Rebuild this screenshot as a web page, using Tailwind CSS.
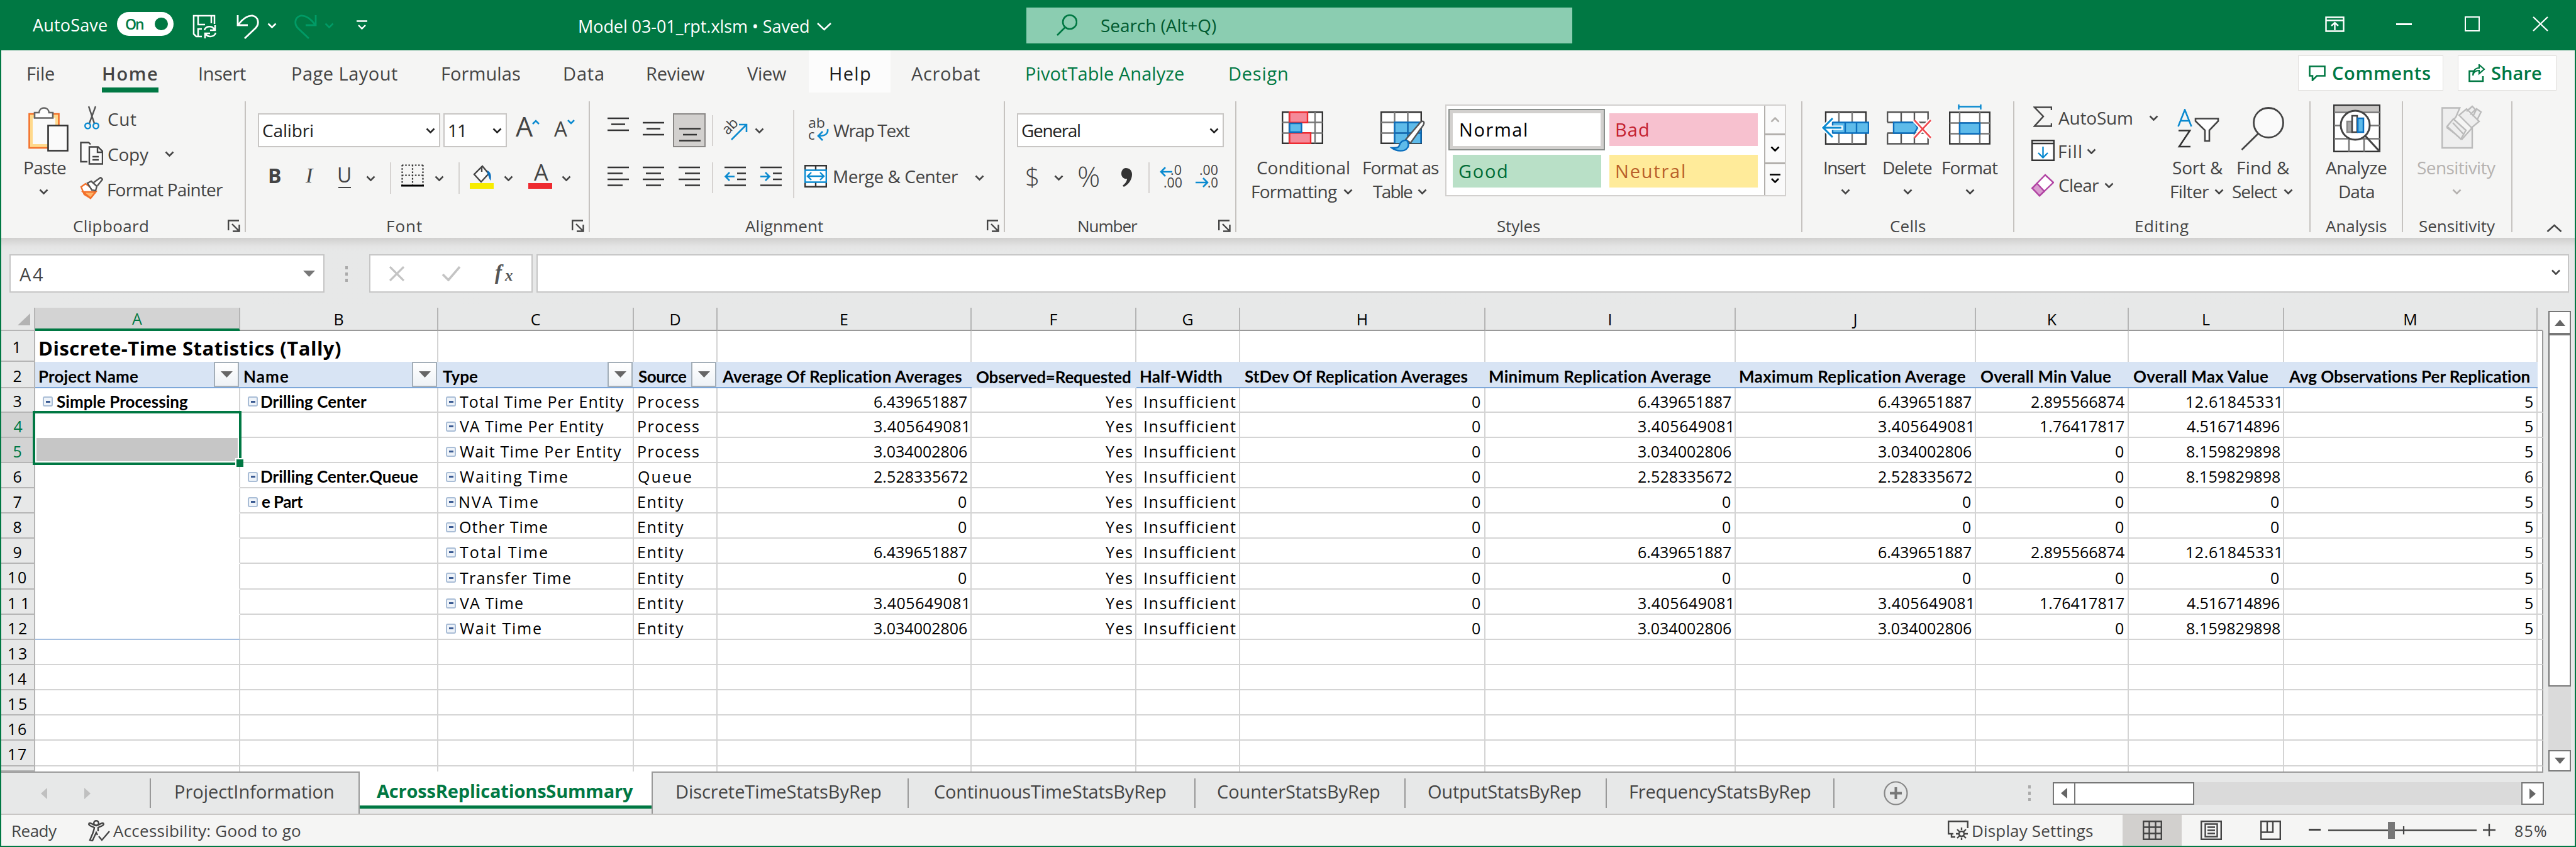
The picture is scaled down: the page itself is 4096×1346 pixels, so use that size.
<!DOCTYPE html>
<html lang="en">
<head>
<meta charset="utf-8">
<title>Model 03-01_rpt.xlsm</title>
<script src="https://cdn.jsdelivr.net/npm/@tailwindcss/browser@4"></script>
</head>
<body class="w-[4096px] h-[1346px] overflow-hidden bg-[#007843]">
<svg class="hidden">
  <symbol id="chev" viewBox="0 0 15 9"><path d="M1.5 1.5l6 6 6-6" fill="none" stroke="currentColor" stroke-width="2.6"/></symbol>
  <symbol id="launch" viewBox="0 0 20 20"><path d="M1.2 17V1.5H18M7 7l10 10M18.5 8v10.5H8" fill="none" stroke="#444" stroke-width="2.4"/></symbol>
</svg>
<div class="w-[4096px] h-[1346px] border-x-2 border-b-2 border-[#007843] bg-[#f5f5f4] font-['Open_Sans',sans-serif] text-[28px] leading-[30px] text-[#444] flex flex-col [&>*]:shrink-0">

<!-- Title bar -->
<header class="h-[80px] bg-[#007843] text-white flex items-center [&>*]:shrink-0">
  <span class="ml-[50px] text-[27px]" data-w="118">AutoSave</span>
  <div class="ml-[16px] -mt-[4px] w-[90px] h-[38px] rounded-full bg-white flex items-center pl-[14px] pr-[9px] justify-between text-[#007843]">
    <span class="text-[23px] font-semibold" data-w="28">On</span><i class="w-[21px] h-[20px] rounded-full bg-[#007843]"></i>
  </div>
  <svg class="ml-[30px] mt-[5px] w-[39px] h-[39px]" viewBox="0 0 39 39" fill="none" stroke="#fff" stroke-width="2.5"><path d="M15 35H6L2 31V2h33v13M9 2v14h11M30 2v12M9 35V23h6"/><path d="M19 25c2-7 12-8 16-1M36 17v8h-8M37 29c-2 7-12 8-16 2M20 38v-8h8"/></svg>
  <svg class="ml-[31px] mt-[5px] w-[36px] h-[39px]" viewBox="0 0 36 39" fill="none" stroke="#fff" stroke-width="2.8"><path d="M2 1v16h16M3 16C10 7 18 1 26 2c9 2 11 13 4 20L13 38"/></svg>
  <svg class="ml-[13px] w-[15px] h-[9px]"><use href="#chev"/></svg>
  <svg class="ml-[28px] mt-[5px] w-[36px] h-[39px]" viewBox="0 0 36 39" fill="none" stroke="#009b66" stroke-width="2.8"><path d="M34 1v16H18M33 16C26 7 18 1 10 2 1 4-1 15 6 22l17 16"/></svg>
  <svg class="ml-[12px] w-[15px] h-[9px] text-[#009b66]"><use href="#chev"/></svg>
  <svg class="ml-[36px] w-[17px] h-[16px]" viewBox="0 0 17 16" fill="none" stroke="#fff" stroke-width="2.4"><path d="M0 1.5h17M3 8l5.500 5.500L14 8"/></svg>
  <span class="ml-[337px] mt-[3px] text-[27px]" data-w="365">Model 03-01_rpt.xlsm • Saved</span>
  <svg class="ml-[12px] mt-[3px] w-[25px] h-[14px]" viewBox="0 0 25 14" fill="none" stroke="#fff" stroke-width="2.6"><path d="M2 2l10.500 10L23 2"/></svg>
  <div class="ml-[309px] w-[868px] h-[57px] bg-[#8bcdb1] text-[#005a30] flex items-center">
    <svg class="ml-[48px] w-[33px] h-[36px]" viewBox="0 0 33 36" fill="none" stroke="#007843" stroke-width="2.6"><circle cx="21" cy="13" r="11"/><path d="M14 21L1 34"/></svg>
    <span class="ml-[38px]" data-w="183">Search (Alt+Q)</span>
  </div>
  <svg class="ml-[1197px] -mt-[4px] w-[31px] h-[25px]" viewBox="0 0 31 25" fill="none" stroke="#fff" stroke-width="2.4"><path d="M1.500 1.500h28v22h-28zM1.500 6.500h28M15.500 22V11M10 15l5.500-5 5.500 5"/></svg>
  <i class="ml-[82px] -mt-[4px] w-[25px] h-[3px] bg-white"></i>
  <i class="ml-[84px] -mt-[4px] w-[24px] h-[24px] border-[2.500px] border-white"></i>
  <svg class="ml-[84px] -mt-[4px] w-[25px] h-[24px]" viewBox="0 0 25 24" stroke="#fff" stroke-width="2.4"><path d="M1 1l23 22M24 1L1 23"/></svg>
</header>

<!-- Ribbon tabs -->
<nav class="h-[68px] flex text-[29px] [&>*]:shrink-0 [&>span]:mt-[22px]">
  <span class="ml-[42px]" data-w="42">File</span>
  <div class="ml-[76px] w-[90px] h-[67px] border-b-[8px] border-[#007843] pt-[22px] pl-[2px] font-semibold"><span data-w="86">Home</span></div>
  <span class="ml-[65px]" data-w="74">Insert</span>
  <span class="ml-[74px]" data-w="167">Page Layout</span>
  <span class="ml-[71px]" data-w="124">Formulas</span>
  <span class="ml-[70px]" data-w="62">Data</span>
  <span class="ml-[70px]" data-w="92">Review</span>
  <span class="ml-[67px]" data-w="63">View</span>
  <div class="ml-[35px] w-[130px] h-[67px] bg-[#fcfcfc] pt-[22px] pl-[34px] text-[#1c1c1c] font-medium"><span data-w="64">Help</span></div>
  <span class="ml-[33px]" data-w="109">Acrobat</span>
  <span class="ml-[74px] text-[#007843] font-medium" data-w="250">PivotTable Analyze</span>
  <span class="ml-[73px] text-[#007843] font-medium" data-w="92">Design</span>
  <div class="ml-auto mt-[8px] w-[231px] h-[56px] bg-white border border-[#e1dfdd] flex items-center text-[#007843] font-semibold">
    <svg class="ml-[16px] w-[27px] h-[25px]" viewBox="0 0 27 25" fill="none" stroke="#007843" stroke-width="2.600"><path d="M1.500 1.500h24v15H13l-7 7v-7H1.500z"/></svg>
    <span class="ml-[11px]" data-w="155">Comments</span>
  </div>
  <div class="ml-[23px] mr-[29px] mt-[8px] w-[157px] h-[56px] bg-white border border-[#e1dfdd] flex items-center text-[#007843] font-semibold">
    <svg class="ml-[16px] w-[27px] h-[29px]" viewBox="0 0 27 29" fill="none" stroke="#007843" stroke-width="2.600"><path d="M8 11H1.500v16H23V19"/><path d="M7 18c1-6 5-8 10-8V15l8-7-8-7v5C10 6 7 12 7 18z" stroke-width="2.200"/></svg>
    <span class="ml-[10px]" data-w="79">Share</span>
  </div>
</nav>

<!-- Ribbon -->
<section class="h-[230px] pt-[13px] flex [&>*]:shrink-0">
  <!-- Clipboard -->
  <div class="w-[389px] h-[208px] border-r-2 border-[#c6c3c0]">
    <div class="flex h-[182px] [&>*]:shrink-0">
      <div class="w-[123px]">
        <svg class="ml-[43px] mt-[9px] w-[64px] h-[71px]" viewBox="0 0 64 71" fill="none" stroke-width="2.600"><path d="M1.500 11h47v54h-47z" fill="#ffd98c" stroke="#f3702a"/><path d="M7 17h36v42H7z" fill="#fafafa"/><path d="M10 17.500V9h7c1-10 15-10 16 0h6v8.500z" fill="#fff" stroke="#666"/><path d="M31.500 29.500h31v40h-31z" fill="#fafafa" stroke="#333"/></svg>
        <div class="ml-[37px] mt-[10px]"><span data-w="66">Paste</span></div>
        <svg class="ml-[60px] mt-[19px] w-[15px] h-[9px]"><use href="#chev"/></svg>
      </div>
      <div>
        <div class="h-[55px] flex items-center">
          <svg class="ml-[9px] -mt-[4px] w-[24px] h-[38px]" viewBox="0 0 24 38" fill="none" stroke-width="2.400"><path d="M7 1l9 27M18 1L8 28" stroke="#555"/><circle cx="5.500" cy="32" r="4.300" stroke="#0a8ad0"/><circle cx="18.500" cy="32" r="4.300" stroke="#0a8ad0"/></svg>
          <span class="ml-[14px]" data-w="45">Cut</span>
        </div>
        <div class="h-[57px] flex items-center">
          <svg class="ml-[2px] -mt-[2px] w-[37px] h-[37px]" viewBox="0 0 37 37" fill="#fafafa" stroke="#444" stroke-width="2.400"><path d="M12 32H1.500V1.500H14l3 3"/><path d="M15 8.500h14l7 7v20H15zM28 9v8h8M20 24h10M20 29h10"/></svg>
          <span class="ml-[8px]" data-w="65">Copy</span>
          <svg class="ml-[25px] w-[15px] h-[9px]"><use href="#chev"/></svg>
        </div>
        <div class="h-[56px] flex items-center">
          <svg class="ml-[2px] -mt-[4px] w-[37px] h-[36px]" viewBox="0 0 37 36" fill="#fff" stroke-width="2.400"><path d="M9 11L2 16l5 12 10 6 9-11z" stroke="#f3702a"/><path d="M5 24h20l-8 10z" fill="#ffb468" stroke="#f3702a"/><path d="M12 10l6-3 9 8-2 7-6-1zM22 9L33 1l3 3-8 10" stroke="#555"/></svg>
          <span class="ml-[8px]" data-w="183">Format Painter</span>
        </div>
      </div>
    </div>
    <div class="h-[31px] flex items-center text-[26px]"><span class="ml-[115px]" data-w="118">Clipboard</span><svg class="ml-[127px] w-[20px] h-[20px]"><use href="#launch"/></svg></div>
  </div>
  <!-- Font -->
  <div class="w-[547px] h-[208px] border-r-2 border-[#c6c3c0]">
    <div class="h-[182px]">
      <div class="pt-[19px] flex items-center [&>*]:shrink-0">
        <div class="ml-[19px] w-[290px] h-[54px] bg-white border-2 border-[#c8c6c4] flex items-center text-[#222]"><span class="ml-[6px]" data-w="79">Calibri</span><svg class="ml-auto mr-[6px] w-[15px] h-[9px]"><use href="#chev"/></svg></div>
        <div class="ml-[5px] w-[101px] h-[54px] bg-white border-2 border-[#c8c6c4] flex items-center text-[#222]"><span class="ml-[7px]" data-w="23">11</span><svg class="ml-auto mr-[6px] w-[15px] h-[9px]"><use href="#chev"/></svg></div>
        <span class="ml-[14px] -mt-[12px] text-[43px]" data-w="26">A</span>
        <svg class="-mt-[26px] w-[12px] h-[8px]" viewBox="0 0 12 8"><path d="M1 7l5-5 5 5" fill="none" stroke="#0a8ad0" stroke-width="2.600"/></svg>
        <span class="ml-[23px] -mt-[5px] text-[33px]" data-w="21">A</span>
        <svg class="-mt-[26px] w-[12px] h-[8px]" viewBox="0 0 12 8"><path d="M1 1l5 5 5-5" fill="none" stroke="#0a8ad0" stroke-width="2.600"/></svg>
      </div>
      <div class="mt-[20px] h-[50px] flex items-center [&>*]:shrink-0 text-[32px]">
        <span class="ml-[37px] font-bold" data-w="18">B</span>
        <span class="ml-[39px] italic font-['Liberation_Serif',serif] text-[34px]" data-w="16">I</span>
        <div class="ml-[37px] w-[20px] h-[36px] mt-[4px] border-b-[2.500px] border-[#444]"><span data-w="20">U</span></div>
        <svg class="ml-[24px] mt-[8px] w-[15px] h-[9px]"><use href="#chev"/></svg>
        <i class="ml-[23px] mt-[8px] w-[2px] h-[50px] bg-[#d6d3d1]"></i>
        <svg class="ml-[16px] w-[36px] h-[36px]" viewBox="0 0 36 36" fill="none" stroke="#333" stroke-width="2.200"><path d="M1 1.500h34M1.500 1v32M34.500 1v32M18 1v32M1 17.500h34" stroke-dasharray="2.600 2.600"/><path d="M0 34h36" stroke="#000" stroke-width="3"/></svg>
        <svg class="ml-[17px] mt-[8px] w-[15px] h-[9px]"><use href="#chev"/></svg>
        <i class="ml-[23px] mt-[8px] w-[2px] h-[50px] bg-[#d6d3d1]"></i>
        <svg class="ml-[16px] mt-[4px] w-[38px] h-[38px]" viewBox="0 0 38 38" fill="none" stroke-width="2.400"><path d="M0 29h38v9H0z" fill="#f7ec00"/><path d="M19 2v9M20 2L7 15l11 12 12-13z" fill="#fafafa" stroke="#444"/><path d="M28 9c5 2 7 8 5 16-2-2-3-8-5-11z" fill="#0a6ebd"/></svg>
        <svg class="ml-[16px] mt-[8px] w-[15px] h-[9px]"><use href="#chev"/></svg>
        <div class="ml-[24px] mt-[4px] w-[38px] h-[38px] border-b-[9px] border-[#ee2a30] pl-[9px]"><div class="-mt-[1px] text-[36px] leading-[26px]"><span data-w="22">A</span></div></div>
        <svg class="ml-[15px] mt-[8px] w-[15px] h-[9px]"><use href="#chev"/></svg>
      </div>
    </div>
    <div class="h-[31px] flex items-center text-[26px]"><span class="ml-[225px]" data-w="55">Font</span><svg class="ml-[238px] w-[20px] h-[20px]"><use href="#launch"/></svg></div>
  </div>
  <!-- Alignment -->
  <div class="w-[660px] h-[208px] border-r-2 border-[#c6c3c0]">
    <div class="flex h-[182px] [&>*]:shrink-0">
      <div class="w-[323px]">
        <div class="mt-[19px] h-[54px] flex items-center [&>*]:shrink-0">
          <svg class="ml-[28px] w-[34px] h-[54px]" viewBox="0 0 34 54" stroke="#333" stroke-width="2.500"><path d="M0 8h34M6 17.500h22M0 27h34"/></svg>
          <svg class="ml-[22px] w-[34px] h-[54px]" viewBox="0 0 34 54" stroke="#333" stroke-width="2.500"><path d="M0 15h34M6 24.500h22M0 34h34"/></svg>
          <div class="ml-[14px] w-[52px] h-[54px] bg-[#d2d0ce] border-2 border-[#8a8886] pl-[8px]"><svg class="-mt-[2px] w-[34px] h-[54px]" viewBox="0 0 34 54" stroke="#333" stroke-width="2.500"><path d="M0 24.500h34M6 34h22M0 43.500h34"/></svg></div>
          <i class="ml-[10px] w-[2px] h-[49px] bg-[#d6d3d1]"></i>
          <svg class="ml-[16px] -mt-[5px] w-[38px] h-[36px] overflow-visible" viewBox="0 0 38 36" fill="none"><g transform="rotate(-45 14 14)"><text x="-1" y="19" font-size="23" fill="#444" textLength="26">ab</text></g><path d="M13 35L36 12M25 11h12v12" stroke="#0a8ad0" stroke-width="2.600"/></svg>
          <svg class="ml-[12px] w-[15px] h-[9px]"><use href="#chev"/></svg>
        </div>
        <div class="mt-[19px] h-[54px] flex items-center [&>*]:shrink-0">
          <svg class="ml-[28px] w-[34px] h-[54px]" viewBox="0 0 34 54" stroke="#333" stroke-width="2.500"><path d="M0 13h34M0 22.500h24M0 32h34M0 41.500h24"/></svg>
          <svg class="ml-[22px] w-[34px] h-[54px]" viewBox="0 0 34 54" stroke="#333" stroke-width="2.500"><path d="M0 13h34M5 22.500h24M0 32h34M5 41.500h24"/></svg>
          <svg class="ml-[23px] w-[34px] h-[54px]" viewBox="0 0 34 54" stroke="#333" stroke-width="2.500"><path d="M0 13h34M10 22.500h24M0 32h34M10 41.500h24"/></svg>
          <i class="ml-[19px] mt-[5px] w-[2px] h-[49px] bg-[#d6d3d1]"></i>
          <svg class="ml-[18px] w-[34px] h-[54px]" viewBox="0 0 34 54" fill="none" stroke="#333" stroke-width="2.500"><path d="M0 13h34M20 22.500h14M20 32h14M0 41.500h34"/><path d="M16 27.500H2M8 21l-6.500 6.500L8 34" stroke="#0a8ad0"/></svg>
          <svg class="ml-[23px] w-[34px] h-[54px]" viewBox="0 0 34 54" fill="none" stroke="#333" stroke-width="2.500"><path d="M0 13h34M20 22.500h14M20 32h14M0 41.500h34"/><path d="M0 27.500h14M8 21l6.500 6.500L8 34" stroke="#0a8ad0"/></svg>
        </div>
      </div>
      <i class="mt-[14px] w-[2px] h-[140px] bg-[#d6d3d1]"></i>
      <div>
        <div class="mt-[19px] h-[54px] flex items-center [&>*]:shrink-0">
          <svg class="ml-[22px] -mt-[3px] w-[33px] h-[39px] overflow-visible" viewBox="0 0 33 39" fill="none"><text x="0" y="17" font-size="22" fill="#444" textLength="27" lengthAdjust="spacingAndGlyphs">ab</text><text x="0" y="36" font-size="22" fill="#444">c</text><path d="M31 19c1 7-3 11-14 11M23 23l-7 7 7 7" stroke="#0a8ad0" stroke-width="2.600"/></svg>
          <span class="ml-[7px]" data-w="122">Wrap Text</span>
        </div>
        <div class="mt-[19px] h-[54px] flex items-center [&>*]:shrink-0">
          <svg class="ml-[16px] w-[36px] h-[36px]" viewBox="0 0 36 36" fill="none" stroke-width="2.400"><path d="M1.200 1.200h33.600v33.600H1.200zM18 1v7M18 28v7" stroke="#333" fill="#fff"/><path d="M1.200 8.500h33.600v19H1.200z" stroke="#0a8ad0" fill="#fff"/><path d="M5 18h26M11 12l-6 6 6 6M25 12l6 6-6 6" stroke="#0a8ad0"/></svg>
          <span class="ml-[11px]" data-w="198">Merge &amp; Center</span>
          <svg class="ml-[26px] mt-[4px] w-[15px] h-[9px]"><use href="#chev"/></svg>
        </div>
      </div>
    </div>
    <div class="h-[31px] flex items-center text-[26px]"><span class="ml-[247px]" data-w="124">Alignment</span><svg class="ml-[260px] w-[20px] h-[20px]"><use href="#launch"/></svg></div>
  </div>
  <!-- Number -->
  <div class="w-[368px] h-[208px] border-r-2 border-[#c6c3c0]">
    <div class="h-[182px]">
      <div class="pt-[19px]"><div class="ml-[19px] w-[329px] h-[54px] bg-white border-2 border-[#c8c6c4] flex items-center text-[#222]"><span class="ml-[6px]" data-w="92">General</span><svg class="ml-auto mr-[6px] w-[15px] h-[9px]"><use href="#chev"/></svg></div></div>
      <div class="mt-[19px] h-[54px] flex items-center [&>*]:shrink-0">
        <span class="ml-[34px] text-[41px] font-light" data-w="19">$</span>
        <svg class="ml-[25px] mt-[4px] w-[15px] h-[9px]"><use href="#chev"/></svg>
        <span class="ml-[24px] text-[45px] font-light" data-w="36">%</span>
        <svg class="ml-[31px] mt-[3px] w-[18px] h-[30px]" viewBox="0 0 18 30"><path d="M8 0c6 0 10 4 10 10 0 8-5 16-13 20l-2-2c4-3 7-7 7-11-5 1-9-3-9-8C1 4 4 0 8 0z" fill="#333"/></svg>
        <i class="ml-[26px] mt-[5px] w-[2px] h-[49px] bg-[#d6d3d1]"></i>
        <svg class="ml-[16px] w-[36px] h-[38px] overflow-visible" viewBox="0 0 36 38" fill="none"><text x="17" y="17" font-size="21" fill="#444" textLength="18" lengthAdjust="spacingAndGlyphs">.0</text><text x="6" y="37" font-size="21" fill="#444" textLength="30" lengthAdjust="spacingAndGlyphs">.00</text><path d="M20 12H2M9 5l-7 7 7 7" stroke="#0a8ad0" stroke-width="2.600"/></svg>
        <svg class="ml-[21px] w-[36px] h-[38px] overflow-visible" viewBox="0 0 36 38" fill="none"><text x="6" y="17" font-size="21" fill="#444" textLength="30" lengthAdjust="spacingAndGlyphs">.00</text><text x="19" y="37" font-size="21" fill="#444" textLength="17" lengthAdjust="spacingAndGlyphs">.0</text><path d="M0 29h18M12 22l7 7-7 7" stroke="#0a8ad0" stroke-width="2.600"/></svg>
      </div>
    </div>
    <div class="h-[31px] flex items-center text-[26px]"><span class="ml-[117px]" data-w="94">Number</span><svg class="ml-[128px] w-[20px] h-[20px]"><use href="#launch"/></svg></div>
  </div>
  <!-- Styles -->
  <div class="w-[900px] h-[208px] border-r-2 border-[#c6c3c0]">
    <div class="h-[182px] flex [&>*]:shrink-0">
      <div class="w-[190px]">
        <svg class="ml-[72px] mt-[16px] w-[66px] h-[52px]" viewBox="0 0 66 52" fill="#fff" stroke-width="2.400"><path d="M1.200 1.200h63.600v49.600H1.200z" stroke="#333"/><path d="M1 17.500h64M1 34.500h64M12 1v50M53 1v50" stroke="#777"/><path d="M12.500 1.200H41v16.500H12.500zM12.500 34.200H46v16.500H12.500z" fill="#f58a99" stroke="#ee2a30"/><path d="M12.500 19h19v14h-19z" fill="#5ebbea" stroke="#0a6ebd"/></svg>
        <div class="ml-[33px] mt-[22px]"><span data-w="146">Conditional</span></div>
        <div class="ml-[25px] mt-[8px] flex items-center"><span data-w="135">Formatting</span><svg class="ml-[10px] w-[15px] h-[9px]"><use href="#chev"/></svg></div>
      </div>
      <div class="w-[142px]">
        <svg class="ml-[39px] mt-[16px] w-[71px] h-[64px]" viewBox="0 0 71 64" fill="#fff" stroke-width="2.400"><path d="M1.200 1.200h63.600v49.600H1.200z" stroke="#333"/><path d="M22.500 17.500h42v33h-42z" fill="#5ebbea"/><path d="M1 17.500h64M1 34.500h64M22.500 1v50M43.500 1v50" stroke="#777"/><path d="M22.500 51V17.500h42V51M22.500 34.500h42M43.500 18v33" fill="none" stroke="#0a6ebd"/><path d="M40 45L64 17c4-3 7 0 4 5L48 50z" fill="#fff" stroke="#555"/><path d="M42 46c-6-1-11 3-12 8-1 4-5 4-12 4 8 6 20 6 24 1 3-3 4-7 0-13z" fill="#5ebbea" stroke="#0a6ebd"/></svg>
        <div class="ml-[12px] mt-[10px]"><span data-w="120">Format as</span></div>
        <div class="ml-[27px] mt-[8px] flex items-center"><span data-w="63">Table</span><svg class="ml-[8px] w-[15px] h-[9px]"><use href="#chev"/></svg></div>
      </div>
      <div class="mt-[5px] w-[542px] h-[146px] bg-white border-2 border-[#d2d0ce] flex text-[29px]">
        <div class="w-[505px] pl-[3px] pt-[5px]">
          <div class="flex">
            <div class="w-[249px] h-[66px] border-2 border-[#8a8f8c]"><div class="w-[245px] h-[62px] border-[5px] border-[#d2d0ce] flex items-center text-black"><span class="ml-[12px]" data-w="105">Normal</span></div></div>
            <div class="ml-[7px] mt-[7px] w-[236px] h-[52px] bg-[#f7c1cf] text-[#c42130] flex items-center"><span class="ml-[11px]" data-w="51">Bad</span></div>
          </div>
          <div class="flex pl-[7px] pt-[7px]">
            <div class="w-[236px] h-[52px] bg-[#b9e0c7] text-[#006b35] flex items-center"><span class="ml-[10px]" data-w="76">Good</span></div>
            <div class="ml-[13px] w-[236px] h-[52px] bg-[#ffeb9a] text-[#b9602a] flex items-center"><span class="ml-[11px]" data-w="108">Neutral</span></div>
          </div>
        </div>
        <div class="w-[33px] h-[142px] border-l-2 border-[#b3b0ad] flex flex-col items-center text-black bg-[#fafafa] [&>*]:shrink-0">
          <div class="h-[47px] w-[31px] border-b-[3px] border-[#b3b0ad] flex items-center justify-center text-[#b3b0ad]"><svg class="w-[15px] h-[9px] -scale-y-100"><use href="#chev"/></svg></div>
          <div class="h-[46px] w-[31px] border-b-[3px] border-[#b3b0ad] flex items-center justify-center"><svg class="w-[15px] h-[9px]"><use href="#chev"/></svg></div>
          <svg class="mt-[15px] w-[17px] h-[16px]" viewBox="0 0 17 16" fill="none" stroke="#000" stroke-width="2.600"><path d="M0 1.500h17M3 8l5.500 5.500L14 8"/></svg>
        </div>
      </div>
    </div>
    <div class="h-[31px] flex items-center text-[26px]"><span class="ml-[415px]" data-w="68">Styles</span></div>
  </div>
  <!-- Cells -->
  <div class="w-[337px] h-[208px] border-r-2 border-[#c6c3c0]">
    <div class="h-[182px] flex [&>*]:shrink-0">
      <div class="w-[120px]">
        <svg class="ml-[30px] mt-[16px] w-[76px] h-[53px]" viewBox="0 0 76 53" fill="#fff" stroke-width="2.400"><path d="M7 1.200h64v50.500H7z" stroke="#333"/><path d="M28 1v51M49 1v51" stroke="#777"/><path d="M18 17.500h57v17H18z" fill="#5ebbea" stroke="#0a6ebd"/><path d="M38 18v16M56 18v16" stroke="#0a6ebd"/><path d="M34 26H3M18 11L3 26l15 15" fill="none" stroke="#fff" stroke-width="7"/><path d="M32 26H3M18 11L3 26l15 15" fill="none" stroke="#0a8ad0" stroke-width="3"/></svg>
        <div class="ml-[35px] mt-[21px]"><span data-w="66">Insert</span></div>
        <svg class="ml-[61px] mt-[19px] w-[15px] h-[9px]"><use href="#chev"/></svg>
      </div>
      <div class="w-[97px]">
        <svg class="ml-[14px] mt-[16px] w-[71px] h-[53px]" viewBox="0 0 71 53" fill="#fff" stroke-width="2.400"><path d="M1.200 17V1.200h64.500V17M1.200 35v16.500h64.500V35M1 17.500h64M1 34.500h64M23 1v51M44 1v51" stroke="#555"/><path d="M11 17.500h33l5 8.500-5 8.500H11z" fill="#5ebbea" stroke="#0a6ebd"/><path d="M44 14l26 28M70 14L44 42" stroke="#fff" stroke-width="7"/><path d="M44 14l26 28M70 14L44 42" stroke="#f0484e" stroke-width="2.600"/></svg>
        <div class="ml-[9px] mt-[21px]"><span data-w="77">Delete</span></div>
        <svg class="ml-[40px] mt-[19px] w-[15px] h-[9px]"><use href="#chev"/></svg>
      </div>
      <div>
        <svg class="ml-[16px] mt-[5px] w-[66px] h-[64px]" viewBox="0 0 66 64" fill="#fff" stroke-width="2.400"><path d="M15.500 0v8M50.500 0v8M15 3.500h36" stroke="#0a8ad0"/><path d="M1.200 12.500h63.600v50H1.200z" stroke="#333"/><path d="M1 29.500h64M1 46.500h64M17 12v50M49 12v50" stroke="#777"/><path d="M17 29.500h32v17H17z" fill="#5ebbea" stroke="#0a6ebd"/></svg>
        <div class="ml-[6px] mt-[21px]"><span data-w="88">Format</span></div>
        <svg class="ml-[42px] mt-[19px] w-[15px] h-[9px]"><use href="#chev"/></svg>
      </div>
    </div>
    <div class="h-[31px] flex items-center text-[26px]"><span class="ml-[140px]" data-w="56">Cells</span></div>
  </div>
  <!-- Editing -->
  <div class="w-[471px] h-[208px] border-r-2 border-[#c6c3c0]">
    <div class="h-[182px] flex [&>*]:shrink-0">
      <div class="w-[235px]">
        <div class="h-[52px] flex items-center [&>*]:shrink-0"><svg class="ml-[30px] -mt-[4px] w-[30px] h-[33px]" viewBox="0 0 30 33" fill="none" stroke="#444" stroke-width="2.500"><path d="M29 6V1.500H2L16 16 2 31.500h27V27"/></svg><span class="ml-[10px]" data-w="117">AutoSum</span><svg class="ml-[27px] w-[15px] h-[9px]"><use href="#chev"/></svg></div>
        <div class="h-[54px] flex items-center [&>*]:shrink-0"><svg class="ml-[27px] -mt-[3px] w-[37px] h-[34px]" viewBox="0 0 37 34" fill="#fff" stroke="#333" stroke-width="2.400"><path d="M1.200 1.200h34.600v31.600H1.200zM1 6h35"/><path d="M18.500 11v17M11 21l7.500 7.500L26 21" fill="none" stroke="#0a8ad0"/></svg><span class="ml-[7px]" data-w="35">Fill</span><svg class="ml-[9px] w-[15px] h-[9px]"><use href="#chev"/></svg></div>
        <div class="h-[54px] flex items-center [&>*]:shrink-0"><svg class="ml-[27px] w-[36px] h-[37px]" viewBox="0 0 36 37" fill="#fff" stroke="#b144a3" stroke-width="2.400"><path d="M22 2l13 12-22 21L1.500 23z"/><path d="M9 15.500L20.500 28 13 35 1.500 23z" fill="#d99bcf"/></svg><span class="ml-[8px]" data-w="64">Clear</span><svg class="ml-[8px] w-[15px] h-[9px]"><use href="#chev"/></svg></div>
      </div>
      <div class="w-[106px]">
        <svg class="ml-[24px] mt-[12px] w-[67px] h-[62px]" viewBox="0 0 67 62" fill="none" stroke-width="2.600"><path d="M1.500 28L12 1.500 22.500 28M5 19h14" stroke="#0a8ad0"/><path d="M2 34.500h18L3 60h18" stroke="#333"/><path d="M29 15.500h36v4L51 34v17h-7V34L29 19.500z" stroke="#444" fill="#fff"/></svg>
        <div class="ml-[17px] mt-[16px]"><span data-w="80">Sort &amp;</span></div>
        <div class="ml-[14px] mt-[8px] flex items-center"><span data-w="61">Filter</span><svg class="ml-[8px] w-[15px] h-[9px]"><use href="#chev"/></svg></div>
      </div>
      <div>
        <svg class="ml-[19px] mt-[9px] w-[70px] h-[70px]" viewBox="0 0 70 70" fill="#fafafa" stroke="#444" stroke-width="2.800"><circle cx="44" cy="25" r="23.500"/><path d="M28 42L1.500 68"/></svg>
        <div class="ml-[14px] mt-[11px]"><span data-w="83">Find &amp;</span></div>
        <div class="ml-[6px] mt-[8px] flex items-center"><span data-w="71">Select</span><svg class="ml-[10px] w-[15px] h-[9px]"><use href="#chev"/></svg></div>
      </div>
    </div>
    <div class="h-[31px] flex items-center text-[26px]"><span class="ml-[193px]" data-w="84">Editing</span></div>
  </div>
  <!-- Analysis -->
  <div class="w-[147px] h-[208px] border-r-2 border-[#c6c3c0]">
    <div class="h-[182px]">
      <div class="pt-[5px]"><svg class="ml-[36px] w-[75px] h-[76px]" viewBox="0 0 75 76" fill="#fff" stroke-width="2.500"><path d="M1.200 1.200h72.600v73.600H1.200z" stroke="#333"/><path d="M2.500 2.500h70v9h-70z" fill="#c8c6c4"/><path d="M1 12.500h73M1 33.500h73M1 54.500h73M25 54v21M49 54v21" stroke="#777"/><circle cx="35" cy="33" r="23" stroke="#444" stroke-width="3"/><path d="M22 27h8v17h-8z" fill="#aaa" stroke="#888"/><path d="M30 18h8v26h-8z" stroke="#444"/><path d="M39 22h9v22h-9z" fill="#5ebbea" stroke="#0a6ebd"/><path d="M51 50l23 25" stroke="#444" stroke-width="3"/></svg></div>
      <div class="ml-[24px] mt-[9px]"><span data-w="97">Analyze</span></div>
      <div class="ml-[46px] mt-[8px]"><span data-w="55">Data</span></div>
    </div>
    <div class="h-[31px] flex items-center text-[26px]"><span class="ml-[24px]" data-w="97">Analysis</span></div>
  </div>
  <!-- Sensitivity -->
  <div class="w-[174px] h-[208px] border-r-2 border-[#c6c3c0]">
    <div class="h-[182px] text-[#b5b2b0]">
      <div class="pt-[6px]"><svg class="ml-[61px] w-[65px] h-[70px]" viewBox="0 0 65 70" fill="#eee" stroke="#bbb" stroke-width="2.400"><path d="M1.200 4.500h28l-6 14L9 36l24 18 16-18v32H1.200z"/><path d="M19 22L9 34l22 20 8-14zM18 28l17 18" /><path d="M28 16l20 20 12-10L40 6zM40 10l9-8 5 5-8 8M50 18l6-12 7 5-6 12" /></svg></div>
      <div class="ml-[23px] mt-[14px]"><span data-w="125">Sensitivity</span></div>
      <svg class="ml-[78px] mt-[19px] w-[15px] h-[9px]"><use href="#chev"/></svg>
    </div>
    <div class="h-[31px] flex items-center text-[26px]"><span class="ml-[26px]" data-w="121">Sensitivity</span></div>
  </div>
  <svg class="ml-[54px] mt-[195px] w-[25px] h-[13px]" viewBox="0 0 25 13" fill="none" stroke="#444" stroke-width="2.600"><path d="M1.500 12l11-10 11 10"/></svg>
</section>

<!-- Formula bar -->
<section class="h-[111px] bg-[#e7e8e8] bg-linear-to-b from-[#d0cfce] from-0% via-[#e4e4e4] via-12% to-[#e7e8e8] to-20% pt-[26px] flex [&>*]:shrink-0">
  <div class="ml-[13px] w-[501px] h-[61px] bg-white border-2 border-[#c6c6c6] flex items-center">
    <span class="ml-[14px] mt-[3px] text-[29px]" data-w="38">A4</span>
    <svg class="ml-auto mr-[13px] w-[19px] h-[10px]" viewBox="0 0 19 10"><path d="M0 0h19l-9.500 10z" fill="#777"/></svg>
  </div>
  <div class="ml-[33px] w-[4px] pt-[19px] flex flex-col gap-[5px] [&>i]:w-[4px] [&>i]:h-[5px] [&>i]:bg-[#aaa]"><i></i><i></i><i></i></div>
  <div class="ml-[34px] w-[260px] h-[61px] bg-white border-2 border-[#c6c6c6] flex items-center">
    <svg class="ml-[29px] w-[26px] h-[24px]" viewBox="0 0 26 24" stroke="#c4c4c4" stroke-width="3.200"><path d="M2 1l22 22M24 1L2 23"/></svg>
    <svg class="ml-[58px] w-[31px] h-[24px]" viewBox="0 0 31 24" fill="none" stroke="#c4c4c4" stroke-width="3.600"><path d="M2 13l9 9L29 1"/></svg>
    <span class="ml-[54px] -mt-[3px] font-['Liberation_Serif',serif] italic font-bold text-[33px] text-[#555]" data-w="15">f</span><span class="mt-[6px] font-['Liberation_Serif',serif] italic font-bold text-[25px] text-[#555]" data-w="14">x</span>
  </div>
  <div class="ml-[6px] w-[3232px] h-[61px] bg-white border-2 border-[#c6c6c6] flex items-center justify-end"><svg class="mr-[11px] mb-[4px] w-[16px] h-[9px]"><use href="#chev"/></svg></div>
</section>

<!-- Worksheet -->
<main class="h-[737px] flex bg-[#e7e8e8] [&>*]:shrink-0">
  <div id="sheet" class="w-[4042px] h-[737px] relative overflow-hidden text-[25px] text-black">
    <div class="absolute left-[50px] top-[164px] w-[332px] h-[86px] border-4 border-[#007843] z-10"><div class="w-full h-full border-2 border-white"></div></div>
    <i class="absolute left-[372px] top-[239px] w-[13px] h-[14px] bg-[#007843] border-l-2 border-t-2 border-white z-20"></i>
  </div>
  <div class="w-[50px] pl-[8px] pt-[5px]">
    <div class="w-[36px] h-[39px] border-2 border-[#777] border-b-[4px] bg-white flex items-center justify-center"><svg class="w-[17px] h-[10px]" viewBox="0 0 17 10"><path d="M0 10h17L8.500 0z" fill="#666"/></svg></div>
    <div class="w-[36px] h-[558px] border-2 border-t-0 border-[#777] bg-white"></div>
    <div class="w-[36px] h-[101px] bg-[#dadada]"></div>
    <div class="w-[36px] h-[34px] border-2 border-[#777] bg-white flex items-center justify-center"><svg class="w-[17px] h-[10px]" viewBox="0 0 17 10"><path d="M0 0h17L8.500 10z" fill="#666"/></svg></div>
  </div>
</main>

<!-- Sheet tabs -->
<nav class="h-[69px] bg-[#e7e8e8] border-b-2 border-[#c8c6c4] flex text-[29px] [&>*]:shrink-0">
  <div class="w-[570px] h-[67px] border-t-2 border-r-2 border-[#999] flex items-center [&>*]:shrink-0">
    <svg class="ml-[63px] w-[10px] h-[18px]" viewBox="0 0 10 18"><path d="M10 0v18L0 9z" fill="#c0c0c0"/></svg>
    <svg class="ml-[59px] w-[10px] h-[18px]" viewBox="0 0 10 18"><path d="M0 0v18l10-9z" fill="#c0c0c0"/></svg>
    <i class="ml-[94px] w-[2px] h-[47px] bg-[#999]"></i>
    <span class="ml-[39px] -mt-[5px]" data-w="251">ProjectInformation</span>
  </div>
  <div class="w-[464px] h-[59px] bg-white border-b-[5px] border-[#007843] text-[#007843] font-bold pt-[16px] pl-[27px]"><span data-w="408">AcrossReplicationsSummary</span></div>
  <div class="w-[3008px] h-[67px] border-t-2 border-l-2 border-[#999] flex items-center [&>*]:shrink-0 [&>span]:-mt-[5px]">
    <span class="ml-[38px]" data-w="325">DiscreteTimeStatsByRep</span><i class="ml-[42px] w-[2px] h-[47px] bg-[#999]"></i>
    <span class="ml-[41px]" data-w="368">ContinuousTimeStatsByRep</span><i class="ml-[45px] w-[2px] h-[47px] bg-[#999]"></i>
    <span class="ml-[35px]" data-w="258">CounterStatsByRep</span><i class="ml-[39px] w-[2px] h-[47px] bg-[#999]"></i>
    <span class="ml-[36px]" data-w="243">OutputStatsByRep</span><i class="ml-[39px] w-[2px] h-[47px] bg-[#999]"></i>
    <span class="ml-[37px]" data-w="287">FrequencyStatsByRep</span><i class="ml-[36px] w-[2px] h-[47px] bg-[#999]"></i>
    <svg class="ml-[78px] w-[39px] h-[39px]" viewBox="0 0 39 39" fill="none" stroke="#888" stroke-width="2.200"><circle cx="19.500" cy="19.500" r="18"/><path d="M10 19.500h19M19.500 10v19" stroke="#777" stroke-width="4"/></svg>
    <div class="ml-[191px] w-[4px] flex flex-col gap-[5px] [&>i]:w-[4px] [&>i]:h-[5px] [&>i]:bg-[#aaa]"><i></i><i></i><i></i></div>
    <div class="ml-[35px] w-[36px] h-[36px] border-2 border-[#777] bg-white flex items-center justify-center"><svg class="w-[10px] h-[17px]" viewBox="0 0 10 17"><path d="M10 0v17L0 8.500z" fill="#666"/></svg></div>
    <div class="w-[189px] h-[36px] border-2 border-l-0 border-[#777] bg-white"></div>
    <div class="w-[519px] h-[36px] bg-[#dadada]"></div>
  </div>
  <div class="-ml-[35px] mt-[17px] w-[36px] h-[36px] border-2 border-[#777] bg-white flex items-center justify-center"><svg class="w-[10px] h-[17px]" viewBox="0 0 10 17"><path d="M0 0v17l10-8.500z" fill="#666"/></svg></div>
</nav>

<!-- Status bar -->
<footer class="h-[49px] flex items-center text-[26px] [&>*]:shrink-0">
  <span class="ml-[18px]" data-w="71">Ready</span>
  <svg class="ml-[48px] w-[36px] h-[34px]" viewBox="0 0 36 34" fill="none" stroke="#444" stroke-width="2.400"><circle cx="14" cy="5" r="3.800"/><path d="M2 6c0 4 8 5 9 6-1 8-4 12-7 20l4 1 6-13 2 4M26 6c0 4-8 5-9 6v6M2 6c2-3 5 1 12 3 7-2 10-6 12-3"/><path d="M18 26l5 6L35 18"/></svg>
  <span class="ml-[5px]" data-w="298">Accessibility: Good to go</span>
  <svg class="ml-[2619px] w-[33px] h-[32px]" viewBox="0 0 33 32" fill="none" stroke="#444" stroke-width="2.400"><path d="M9 21H1.200V1.200h30.600V12"/><circle cx="22" cy="21" r="4"/><path d="M22 11v4M22 27v4M13 21h5M27 21h5M15 14l4 4M29 14l-4 4M15 28l4-4M29 28l-4-4M6 21v5h6"/></svg>
  <span class="ml-[7px]" data-w="191">Display Settings</span>
  <div class="ml-[47px] w-[94px] h-[49px] bg-[#d2d0ce] flex items-center justify-center"><svg class="w-[31px] h-[31px]" viewBox="0 0 31 31" fill="none" stroke="#444" stroke-width="2.400"><path d="M1.200 1.200h28.600v28.600H1.200zM1 10.500h29M1 20.500h29M10.500 1v29M20.500 1v29"/></svg></div>
  <svg class="ml-[30px] w-[34px] h-[31px]" viewBox="0 0 34 31" fill="none" stroke="#444" stroke-width="2.400"><path d="M1.200 1.200h31.600v28.600H1.200zM7.500 5.500h19v20h-19zM11 10.500h12M11 15.500h12M11 20.500h12"/></svg>
  <svg class="ml-[61px] w-[33px] h-[31px]" viewBox="0 0 33 31" fill="none" stroke="#444" stroke-width="2.400"><path d="M1.200 1.200h30.600v28.600H1.200zM1 18.500h19V1M11 1v17"/></svg>
  <i class="ml-[44px] -mt-[3px] w-[19px] h-[3px] bg-[#444]"></i>
  <svg class="ml-[12px] w-[236px] h-[27px]" viewBox="0 0 236 27"><path d="M0 13.500h236" stroke="#444" stroke-width="2.600"/><path d="M120 7v13" stroke="#444" stroke-width="2.200"/><path d="M95 0h11v27H95z" fill="#777"/></svg>
  <svg class="ml-[10px] -mt-[2px] w-[20px] h-[20px]" viewBox="0 0 20 20" stroke="#444" stroke-width="2.400"><path d="M0 10h20M10 0v20"/></svg>
  <span class="ml-[31px] text-[25px]" data-w="50">85%</span>
</footer>
</div>

<script>
// Worksheet contents: [text, drawn width] per cell, one array per row
const N = { '6.439651887': 148, '3.405649081': 148, '3.034002806': 148, '2.528335672': 148, '2.895566874': 148, '1.76417817': 133, '12.61845331': 148, '4.516714896': 148, '8.159829898': 148, '0': 14, '5': 13, '6': 13 };
const rows = [
  ['Simple Processing|209', 'Drilling Center|167', 'Total Time Per Entity|261', 'Process|96', '6.439651887', '2.895566874', '12.61845331', '5'],
  ['', '', 'VA Time Per Entity|229', 'Process|96', '3.405649081', '1.76417817', '4.516714896', '5'],
  ['', '', 'Wait Time Per Entity|257', 'Process|96', '3.034002806', '0', '8.159829898', '5'],
  ['', 'Drilling Center.Queue|249', 'Waiting Time|171', 'Queue|84', '2.528335672', '0', '8.159829898', '6'],
  ['', 'e Part|66', 'NVA Time|124', 'Entity|72', '0', '0', '0', '5'],
  ['', '', 'Other Time|139', 'Entity|72', '0', '0', '0', '5'],
  ['', '', 'Total Time|139', 'Entity|72', '6.439651887', '2.895566874', '12.61845331', '5'],
  ['', '', 'Transfer Time|176', 'Entity|72', '0', '0', '0', '5'],
  ['', '', 'VA Time|100', 'Entity|72', '3.405649081', '1.76417817', '4.516714896', '5'],
  ['', '', 'Wait Time|129', 'Entity|72', '3.034002806', '0', '8.159829898', '5'],
];
const widths = ['w-[326px]', 'w-[315px]', 'w-[311px]', 'w-[133px]', 'w-[404px]', 'w-[262px]', 'w-[165px]', 'w-[390px]', 'w-[398px]', 'w-[382px]', 'w-[243px]', 'w-[247px]', 'w-[403px]', 'w-[9px]'];
const heads = ['Project Name|157', 'Name|70', 'Type|56', 'Source|77', 'Average Of Replication Averages|383', 'Observed=Requested|246', 'Half-Width|129', 'StDev Of Replication Averages|357', 'Minimum Replication Average|353', 'Maximum Replication Average|360', 'Overall Min Value|209', 'Overall Max Value|216', 'Avg Observations Per Replication|385', ''];
const bold = "font-['Lato',sans-serif] font-bold text-[26px]";
const span = (t, w, c = '') => `<span class="${c}" data-w="${w}">${t}</span>`;
const part = s => s.split('|');
const minus = '<i class="w-[16px] h-[16px] mt-[1px] mr-[6px] rounded-[3px] border-2 border-[#a9bdd6] bg-[#eef3f9] flex items-center justify-center shrink-0"><b class="w-[7px] h-[3px] bg-[#3a5a92]"></b></i>';
const filter = '<i class="ml-auto mr-[2px] w-[40px] h-[40px] shrink-0 border-2 border-[#a3aeb8] bg-linear-to-b from-white to-[#eef2f6] flex items-center justify-center"><svg class="w-[19px] h-[10px]" viewBox="0 0 19 10"><path d="M0 0h19l-9.500 10z" fill="#666"/></svg></i>';
const rowHead = (n, h, sel) => `<div class="w-[54px] ${h} shrink-0 border-r-2 border-b-2 pt-[3px] flex items-center justify-center ${sel ? 'bg-[#d3d3d3] border-[#b5b5b5] text-[#007843]' : 'border-[#b5b5b5]'}">${n ? span(n, n < 10 ? 13 : 28) : ''}</div>`;

let html = '<div class="flex h-[37px]"><div class="w-[54px] h-[37px] shrink-0 border-b-2 border-r-2 border-[#b5b5b5] pl-[26px] pt-[9px]"><svg class="w-[20px] h-[19px]" viewBox="0 0 20 19"><path d="M20 0v19H0z" fill="#b3b3b3"/></svg></div>';
'ABCDEFGHIJKLM'.split('').concat('').forEach((l, i) => {
  html += `<div class="${widths[i]} h-[37px] shrink-0 flex items-center justify-center border-r-2 ${i === 0 ? 'bg-[#d3d3d3] border-b-4 border-b-[#007843] border-r-[#b5b5b5] text-[#007843]' : i === 13 ? 'border-b-2 border-b-[#999] border-r-transparent' : 'border-b-2 border-b-[#999] border-r-[#b5b5b5]'}">${l ? `<span>${l}</span>` : ''}</div>`;
});
html += '</div><div class="flex h-[49px]">' + rowHead(1, 'h-[49px]');
widths.forEach((w, i) => {
  html += `<div class="${w} h-[49px] shrink-0 bg-white border-r-2 ${i === 0 ? 'border-white' : i === 13 ? 'border-[#999]' : 'border-[#d4d4d4]'} pt-[5px] pl-[7px] flex items-center whitespace-nowrap">${i === 0 ? span('Discrete-Time Statistics (Tally)', 479, 'text-[31px] font-bold relative') : ''}</div>`;
});
html += '</div><div class="flex h-[42px]">' + rowHead(2, 'h-[42px]');
widths.forEach((w, i) => {
  const [t, tw] = part(heads[i]);
  html += i === 13 ? `<div class="${w} h-[42px] shrink-0 bg-white border-r-2 border-[#999]"></div>`
    : `<div class="${w} h-[42px] shrink-0 bg-[#d8e4f4] ${i === 5 ? '' : 'border-b-2 border-[#7da7d9]'} flex items-center"><div class="pt-[5px] pl-[7px] ${bold}">${span(t, tw)}</div>${i < 4 ? filter : ''}</div>`;
});
html += '</div>';
for (let r = 3; r <= 18; r++) {
  const h = r === 3 ? 'h-[39px]' : r === 18 ? 'h-[8px]' : r === 10 || r === 17 ? 'h-[41px]' : 'h-[40px]';
  const d = rows[r - 3];
  html += `<div class="flex ${h}">` + rowHead(r < 18 ? r : '', h, r === 4 || r === 5);
  const vals = d ? [d[0], d[1], d[2], d[3], d[4], 'Yes|42', 'Insufficient|145', '0', d[4], d[4], d[5], d[6], d[7], ''] : Array(14).fill('');
  vals.forEach((v, i) => {
    const right = i > 3 && i !== 6;
    const bottom = r === 18 ? '' : i === 0 && r < 12 ? 'border-b-2 border-b-white' : i === 0 && r === 12 ? 'border-b-2 border-b-[#a5bfe0]' : 'border-b-2 border-b-[#d4d4d4]';
    const bg = i === 0 && r === 5 ? 'bg-[#c6c6c6]' : 'bg-white';
    let inner = '';
    if (v) {
      const [t, tw] = part(v);
      inner = (i < 3 ? minus : '') + span(t, tw || N[t], i < 2 ? bold : '');
    }
    html += `<div class="${widths[i]} ${h} shrink-0 ${bg} border-r-2 ${i === 13 ? 'border-r-[#999]' : 'border-r-[#d4d4d4]'} ${bottom} pt-[4px] flex items-center ${right ? 'justify-end pr-[5px]' : i < 3 ? 'pl-[12px]' : i === 6 ? 'pl-[13px]' : 'pl-[7px]'}">${inner}</div>`;
  });
  html += '</div>';
}
document.getElementById('sheet').insertAdjacentHTML('afterbegin', html);

// Track each label so that its ink spans exactly data-w pixels
const ctx = document.createElement('canvas').getContext('2d');
function fitLabels() {
  for (const el of document.querySelectorAll('[data-w]')) {
    const s = getComputedStyle(el), t = el.textContent, w = +el.dataset.w;
    ctx.font = `${s.fontStyle} ${s.fontWeight} ${s.fontSize} ${s.fontFamily}`;
    const m = ctx.measureText(t);
    const ink = m.actualBoundingBoxLeft + m.actualBoundingBoxRight;
    el.style.display = 'block';
    el.style.flexShrink = 0;
    el.style.whiteSpace = 'pre';
    el.style.width = w + 'px';
    el.style.textIndent = m.actualBoundingBoxLeft + 'px';
    if (t.length > 1) el.style.letterSpacing = (w - ink) / (t.length - 1) + 'px';
  }
}
fitLabels();
addEventListener('load', fitLabels);
document.fonts.ready.then(fitLabels);
requestAnimationFrame(() => requestAnimationFrame(fitLabels));
new MutationObserver(fitLabels).observe(document.head, { childList: true, subtree: true });
</script>
</body>
</html>
